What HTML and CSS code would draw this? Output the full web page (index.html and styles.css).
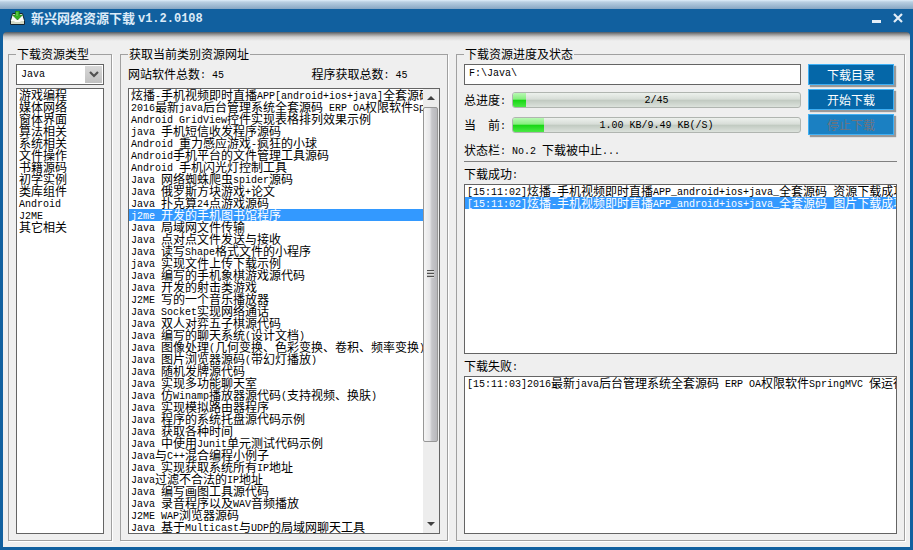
FILE: index.html
```
<!DOCTYPE html>
<html lang="zh-CN">
<head>
  <meta charset="UTF-8">
  <meta name="viewport" content="width=device-width, initial-scale=1.0">
  <title>新兴网络资源下载</title>
  <link rel="stylesheet" href="styles.css">
</head>
<body>
  <div class="window">
    <header class="titlebar">
      <svg class="app-icon" width="15" height="14" viewBox="0 0 15 14">
        <path d="M2.500 2.500h10l2 7v4H.5v-4z" fill="#fbfcf8" stroke="#12222e" stroke-width="1"/>
        <path d="M1 10h3l1 1h5l1-1h3v3H1z" fill="#d3dac6"/>
        <path d="M5.500 0h4v4h3L7.500 9 2.500 4h3z" fill="#35b022" stroke="#176c0d" stroke-width=".6"/>
        <path d="M6.500 1h1v4h-1z" fill="#7ddc5e"/>
      </svg>
      <h1>新兴网络资源下载 <span class="en">v1.2.0108</span></h1>
      <button type="button" class="win-button" aria-label="最小化">
        <svg width="10" height="10" viewBox="0 0 10 10"><path d="M0 8.500h9" stroke="#e4eef7" stroke-width="3"/></svg>
      </button>
      <button type="button" class="win-button" aria-label="关闭">
        <svg width="10" height="10" viewBox="0 0 10 10"><path d="M1 1l8 8M9 1L1 9" stroke="#e4eef7" stroke-width="2.200"/></svg>
      </button>
    </header>

    <main class="content">
      <fieldset class="group">
        <legend>下载资源类型</legend>
        <div class="combo">
          <select aria-label="下载资源类型">
            <option>Java</option>
          </select>
          <span class="combo-arrow">
            <svg width="10" height="7" viewBox="0 0 10 7"><path d="M1 1l4 4 4-4" fill="none" stroke="#505050" stroke-width="2.200"/></svg>
          </span>
        </div>
        <div class="listbox">
          <ul>
            <li>游戏编程</li>
            <li>媒体网络</li>
            <li>窗体界面</li>
            <li>算法相关</li>
            <li>系统相关</li>
            <li>文件操作</li>
            <li>书籍源码</li>
            <li>初学实例</li>
            <li>类库组件</li>
            <li><span class="en">Android</span></li>
            <li><span class="en">J2ME</span></li>
            <li>其它相关</li>
          </ul>
        </div>
      </fieldset>

      <fieldset class="group">
        <legend>获取当前类别资源网址</legend>
        <div class="counts">
          <span>网站软件总数<span class="en">: 45</span></span>
          <span>程序获取总数<span class="en">: 45</span></span>
        </div>
        <div class="listbox">
          <ul>
            <li>炫播<span class="en">-</span>手机视频即时直播<span class="en">APP[android+ios+java]</span>全套源码</li>
            <li><span class="en">2016</span>最新<span class="en">java</span>后台管理系统全套源码<span class="en"> ERP OA</span>权限软件<span class="en">SpringMVC</span></li>
            <li><span class="en">Android GridView</span>控件实现表格排列效果示例</li>
            <li><span class="en">java </span>手机短信收发程序源码</li>
            <li><span class="en">Android </span>重力感应游戏<span class="en">-</span>疯狂的小球</li>
            <li><span class="en">Android</span>手机平台的文件管理工具源码</li>
            <li><span class="en">Android </span>手机闪光灯控制工具</li>
            <li><span class="en">Java </span>网络蜘蛛爬虫<span class="en">spider</span>源码</li>
            <li><span class="en">Java </span>俄罗斯方块游戏<span class="en">+</span>论文</li>
            <li><span class="en">Java </span>扑克算<span class="en">24</span>点游戏源码</li>
            <li class="selected"><span class="en">j2me </span>开发的手机图书馆程序</li>
            <li><span class="en">Java </span>局域网文件传输</li>
            <li><span class="en">Java </span>点对点文件发送与接收</li>
            <li><span class="en">Java </span>读写<span class="en">Shape</span>格式文件的小程序</li>
            <li><span class="en">java </span>实现文件上传下载示例</li>
            <li><span class="en">Java </span>编写的手机象棋游戏源代码</li>
            <li><span class="en">Java </span>开发的射击类游戏</li>
            <li><span class="en">J2ME </span>写的一个音乐播放器</li>
            <li><span class="en">Java Socket</span>实现网络通话</li>
            <li><span class="en">Java </span>双人对弈五子棋源代码</li>
            <li><span class="en">Java </span>编写的聊天系统<span class="en">(</span>设计文档<span class="en">)</span></li>
            <li><span class="en">Java </span>图像处理<span class="en">(</span>几何变换、色彩变换、卷积、频率变换<span class="en">)</span></li>
            <li><span class="en">Java </span>图片浏览器源码<span class="en">(</span>带幻灯播放<span class="en">)</span></li>
            <li><span class="en">Java </span>随机发牌源代码</li>
            <li><span class="en">Java </span>实现多功能聊天室</li>
            <li><span class="en">Java </span>仿<span class="en">Winamp</span>播放器源代码<span class="en">(</span>支持视频、换肤<span class="en">)</span></li>
            <li><span class="en">Java </span>实现模拟路由器程序</li>
            <li><span class="en">Java </span>程序的系统托盘源代码示例</li>
            <li><span class="en">Java </span>获取各种时间</li>
            <li><span class="en">Java </span>中使用<span class="en">Junit</span>单元测试代码示例</li>
            <li><span class="en">Java</span>与<span class="en">C++</span>混合编程小例子</li>
            <li><span class="en">Java </span>实现获取系统所有<span class="en">IP</span>地址</li>
            <li><span class="en">Java</span>过滤不合法的<span class="en">IP</span>地址</li>
            <li><span class="en">Java </span>编写画图工具源代码</li>
            <li><span class="en">Java </span>录音程序以及<span class="en">WAV</span>音频播放</li>
            <li><span class="en">J2ME WAP</span>浏览器源码</li>
            <li><span class="en">Java </span>基于<span class="en">Multicast</span>与<span class="en">UDP</span>的局域网聊天工具</li>
          </ul>
          <div class="scrollbar">
            <span class="scroll-arrow"><svg width="8" height="4" viewBox="0 0 8 4"><path d="M0 4l4-4 4 4z" fill="#404040"/></svg></span>
            <div class="scroll-thumb"><span class="grip"></span></div>
            <div class="scroll-rest"></div>
            <span class="scroll-arrow"><svg width="8" height="4" viewBox="0 0 8 4"><path d="M0 0l4 4 4-4z" fill="#404040"/></svg></span>
          </div>
        </div>
      </fieldset>

      <fieldset class="group">
        <legend>下载资源进度及状态</legend>
        <div class="controls">
          <input type="text" class="path" value="F:\Java\" aria-label="下载目录">
          <button type="button" class="button">下载目录</button>
          <div class="progress-row">
            <span class="progress-label">总进度<span class="en">:</span></span>
            <div class="progress" role="progressbar" aria-label="总进度">
              <div class="progress-fill" style="width: 4.4%"></div>
              <span class="progress-text en">2/45</span>
            </div>
          </div>
          <button type="button" class="button">开始下载</button>
          <div class="progress-row">
            <span class="progress-label">当　前<span class="en">:</span></span>
            <div class="progress" role="progressbar" aria-label="当前">
              <div class="progress-fill" style="width: 10.9%"></div>
              <span class="progress-text en">1.00 KB/9.49 KB(/S)</span>
            </div>
          </div>
          <button type="button" class="button" disabled>停止下载</button>
        </div>
        <div class="status">状态栏<span class="en">: No.2 </span>下载被中止<span class="en">...</span></div>
        <div class="list-title">下载成功<span class="en">:</span></div>
        <div class="listbox log-done">
          <ul>
            <li><span class="en">[15:11:02]</span>炫播<span class="en">-</span>手机视频即时直播<span class="en">APP_android+ios+java_</span>全套源码<span class="en"> </span>资源下载成功</li>
            <li class="selected"><span class="en">[15:11:02]</span>炫播<span class="en">-</span>手机视频即时直播<span class="en">APP_android+ios+java_</span>全套源码<span class="en"> </span>图片下载成功</li>
          </ul>
        </div>
        <div class="list-title">下载失败<span class="en">:</span></div>
        <div class="listbox log-failed">
          <ul>
            <li><span class="en">[15:11:03]2016</span>最新<span class="en">java</span>后台管理系统全套源码<span class="en"> ERP OA</span>权限软件<span class="en">SpringMVC </span>保运行</li>
          </ul>
        </div>
      </fieldset>
    </main>
  </div>
</body>
</html>
```

FILE: styles.css
```
* {
  box-sizing: border-box;
}

body {
  margin: 0;
  font-family: "Noto Sans CJK SC", sans-serif;
  font-size: 12px;
  line-height: 16px;
  color: #000;
}

/* latin text takes half the width of a chinese character */
.en {
  font-family: "Liberation Mono", monospace;
  font-size: 10px;
  line-height: 0;
  vertical-align: 1px;
  white-space: pre;
}

.window {
  display: flex;
  flex-direction: column;
  height: 100vh;
  padding: 0 3px 3px;
  background: linear-gradient(#dfeefa 0, #b9cfe2 2px, #86a6c3 9px, #11609f 9px);
}

.titlebar {
  display: flex;
  align-items: center;
  gap: 6px;
  flex: none;
  height: 32px;
  padding: 4px 5px 0 7px;
}

.titlebar h1 {
  flex: 1;
  margin: 0;
  font-size: 13px;
  font-weight: bold;
  color: #dcebf8;
}

.titlebar .en {
  font-size: 12px;
}

.win-button {
  width: 15px;
  height: 14px;
  padding: 0;
  border: none;
  background: none;
  line-height: 0;
}

.content {
  display: grid;
  grid-template-columns: 104px 328fr 449fr;
  gap: 8px;
  flex: 1;
  min-height: 0;
  padding: 14px 5px 6px;
  border-radius: 4px 4px 0 0;
  background: linear-gradient(#4d5a66 0, #8c8c8c 2px, #d0d0d0 5px, #efefef 9px);
}

.group {
  display: flex;
  flex-direction: column;
  min-width: 0;
  min-height: 0;
  margin: 0;
  padding: 2px 7px 6px;
  border: 1px solid #a0a0a0;
  box-shadow: 1px 1px 0 #fff;
}

legend {
  height: 16px;
  padding: 0 1px;
}

/* lists */
.listbox {
  display: flex;
  flex: 1;
  min-height: 0;
  border: 1px solid #646464;
  background: #fff;
}

.listbox ul {
  flex: 1;
  min-width: 0;
  margin: 0;
  padding: 0;
  list-style: none;
  overflow: hidden;
}

.listbox li {
  height: 12px;
  padding: 0 2px;
  line-height: 12px;
  white-space: nowrap;
}

.listbox .selected {
  background: #3399ff;
  color: #fff;
}

.list-title {
  height: 16px;
  margin: 4px 0 2px;
}

.log-done {
  flex: 171;
}

.log-failed {
  flex: 158;
}

/* category drop-down */
.combo {
  position: relative;
  margin-bottom: 3px;
}

.combo select {
  display: block;
  width: 100%;
  height: 21px;
  padding: 0 4px;
  appearance: none;
  border: 1px solid #646464;
  border-radius: 0;
  background: #fff;
  font-family: "Liberation Mono", monospace;
  font-size: 10px;
  color: #000;
}

.combo-arrow {
  position: absolute;
  top: 2px;
  right: 2px;
  bottom: 2px;
  display: flex;
  align-items: center;
  justify-content: center;
  width: 17px;
  background: linear-gradient(#d8d8d8, #c0c0c0);
  pointer-events: none;
}

.counts {
  display: grid;
  grid-template-columns: 184fr 129fr;
  height: 16px;
  margin: 2px 0 6px;
}

/* scrollbar */
.scrollbar {
  display: flex;
  flex-direction: column;
  flex: none;
  width: 16px;
  background: #ededed;
}

.scroll-arrow {
  display: flex;
  align-items: center;
  justify-content: center;
  height: 18px;
}

.scroll-thumb {
  display: flex;
  align-items: center;
  justify-content: center;
  flex: 335;
  margin-right: 1px;
  border: 1px solid #979797;
  border-radius: 2px;
  background: linear-gradient(90deg, #f5f5f5 0, #e6e6e8 45%, #c6c6ca 60%, #b8b8bc);
}

.grip {
  width: 7px;
  height: 8px;
  background: repeating-linear-gradient(#505050 0, #505050 1px, #eee 1px, #b0b0b0 3px);
}

.scroll-rest {
  flex: 74;
}

/* progress panel */
.controls {
  display: grid;
  grid-template-columns: 1fr 86px;
  grid-auto-rows: 21px;
  gap: 4px 7px;
  margin-right: 3px;
}

.path {
  min-width: 0;
  padding: 0 4px 2px;
  border: 1px solid #646464;
  background: #fff;
  font-family: "Liberation Mono", monospace;
  font-size: 10px;
  color: #000;
}

.button {
  padding: 0;
  border: 1px solid #3fb0f5;
  background: #0567a8;
  box-shadow: 2px 2px 1px #999;
  font-family: inherit;
  font-size: 12px;
  line-height: 16px;
  color: #fff;
}

.button:disabled {
  background: #1b80c2;
  color: #6f7480;
}

.progress-row {
  display: flex;
  align-items: center;
}

.progress-label {
  width: 48px;
}

.progress {
  position: relative;
  flex: 1;
  height: 16px;
  border: 1px solid #b0b5b0;
  border-radius: 3px;
  background: linear-gradient(#edf1ed 0, #d7ddd7 45%, #c0c9c0 50%, #dce2dc);
  overflow: hidden;
}

.progress-fill {
  height: 100%;
  background: linear-gradient(#b9f8b4 0, #84ee7c 45%, #16d612 50%, #4be846);
}

.progress-text {
  position: absolute;
  inset: 0;
  line-height: 16px;
  text-align: center;
}

.status {
  height: 20px;
  margin-top: 7px;
  border-bottom: 1px solid #808080;
}
```
